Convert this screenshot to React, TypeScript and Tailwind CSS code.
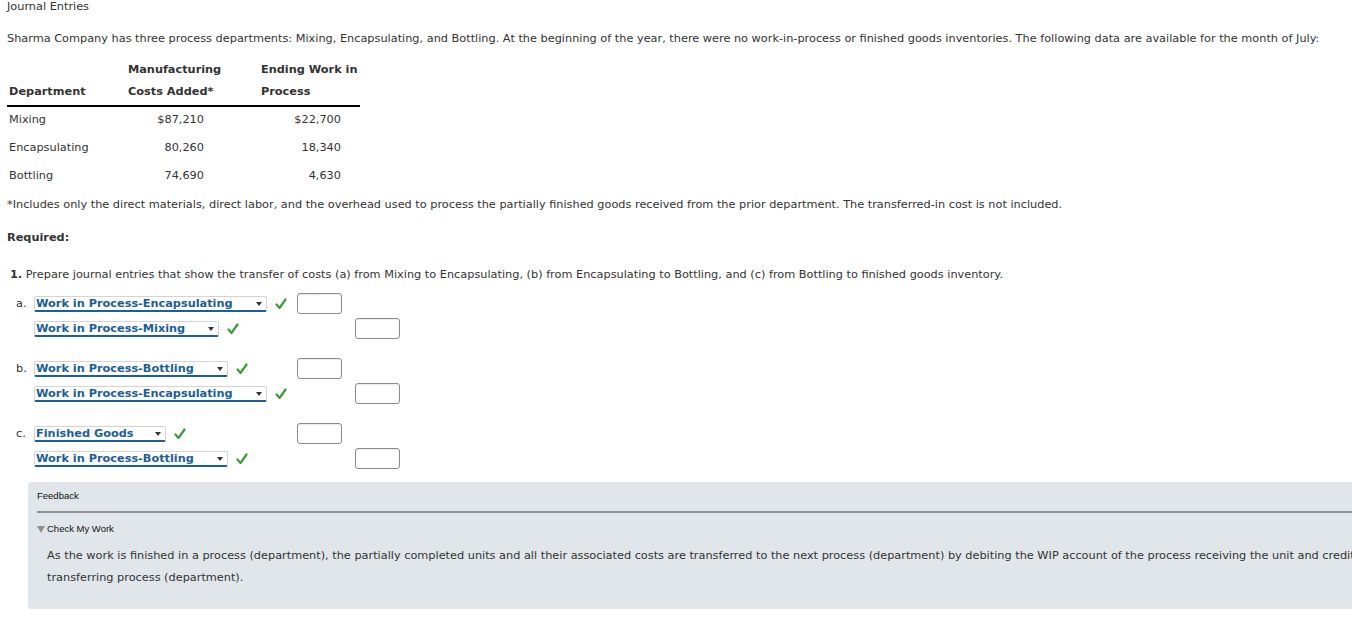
import React from 'react';

interface Entry {
  label?: string;
  account: string;
  width: string;
  side: 'debit' | 'credit';
}

const groups: Entry[][] = [
  [
    { label: 'a.', account: 'Work in Process-Encapsulating', width: 'w-[233px]', side: 'debit' },
    { account: 'Work in Process-Mixing', width: 'w-[185px]', side: 'credit' },
  ],
  [
    { label: 'b.', account: 'Work in Process-Bottling', width: 'w-[194px]', side: 'debit' },
    { account: 'Work in Process-Encapsulating', width: 'w-[233px]', side: 'credit' },
  ],
  [
    { label: 'c.', account: 'Finished Goods', width: 'w-[132px]', side: 'debit' },
    { account: 'Work in Process-Bottling', width: 'w-[194px]', side: 'credit' },
  ],
];

const rows = [
  { dept: 'Mixing', costs: '$87,210', wip: '$22,700' },
  { dept: 'Encapsulating', costs: '80,260', wip: '18,340' },
  { dept: 'Bottling', costs: '74,690', wip: '4,630' },
];

const Check = () => (
  <svg viewBox="0 0 12 12" className="h-[12px] w-[12px] shrink-0">
    <path d="M1.5 6.5 L4.5 10 L10.5 1.5" fill="none" stroke="#3c9a3c" strokeWidth="2.2" strokeLinecap="round" strokeLinejoin="round" />
  </svg>
);

const AccountSelect = ({ account, width }: { account: string; width: string }) => (
  <div className={`${width} relative h-[16px] overflow-hidden rounded-[2px] border border-b-2 border-[#d4d4d4] border-b-[#1b5e98] bg-white`}>
    <span className="absolute left-[1px] top-[-2px] whitespace-nowrap text-[11.3px] font-bold leading-[18px] text-[#1b5e98]">
      {account}
    </span>
    <span className="absolute right-[4px] top-[5px] h-0 w-0 border-x-[3px] border-t-[4px] border-x-transparent border-t-[#333]" />
  </div>
);

const AmountBox = () => (
  <div className="h-[21px] w-[45px] rounded-[3px] border border-[#8c8c8c] bg-white shadow-[inset_0_1px_1px_rgba(0,0,0,0.08)]" />
);

export default function App() {
  return (
    <div className="w-[1352px] h-[621px] overflow-hidden bg-white text-[11.3px] text-[#333] font-['DejaVu_Sans',Verdana,sans-serif]">
      <div className="pl-[7px] leading-[13px]">Journal Entries</div>

      <p className="mt-[19px] pl-[7px] leading-[14px] whitespace-nowrap">
        Sharma Company has three process departments: Mixing, Encapsulating, and Bottling. At the beginning of the year, there were no work-in-process or finished goods inventories. The following data are available for the month of July:
      </p>

      {/* Data table */}
      <div className="ml-[7px] mt-[13px] w-[353px]">
        <div className="grid grid-cols-[121px_133px_99px] border-b-2 border-black font-bold leading-[22px] pb-[2px]">
          <div className="pl-[2px] self-end">Department</div>
          <div>
            Manufacturing
            <br />
            Costs Added*
          </div>
          <div>
            Ending Work in
            <br />
            Process
          </div>
        </div>
        {rows.map((r) => (
          <div key={r.dept} className="grid grid-cols-[121px_133px_99px] h-[28px] items-center pb-[2px]">
            <div className="pl-[2px]">{r.dept}</div>
            <div className="text-right pr-[57px]">{r.costs}</div>
            <div className="text-right pr-[19px]">{r.wip}</div>
          </div>
        ))}
      </div>

      <p className="mt-[6px] pl-[7px] leading-[16px]">
        *Includes only the direct materials, direct labor, and the overhead used to process the partially finished goods received from the prior department. The transferred-in cost is not included.
      </p>

      <p className="mt-[17px] pl-[7px] font-bold leading-[16px]">Required:</p>

      <p className="mt-[21px] pl-[10px] leading-[16px]">
        <span className="font-bold">1.</span> Prepare journal entries that show the transfer of costs (a) from Mixing to Encapsulating, (b) from Encapsulating to Bottling, and (c) from Bottling to finished goods inventory.
      </p>

      {/* Journal entry rows */}
      <div className="mt-[8px] flex flex-col gap-[15px]">
        {groups.map((g, gi) => (
          <div key={gi} className="flex flex-col">
            {g.map((e, ei) => (
              <div key={ei} className="grid grid-cols-[297px_58px_45px] items-center h-[25px]">
                <div className="flex items-center">
                  <span className="w-[34px] pl-[16px] leading-[16px]">{e.label ?? ''}</span>
                  <AccountSelect account={e.account} width={e.width} />
                  <span className="ml-[8px]">
                    <Check />
                  </span>
                </div>
                <div>{e.side === 'debit' && <AmountBox />}</div>
                <div>{e.side === 'credit' && <AmountBox />}</div>
              </div>
            ))}
          </div>
        ))}
      </div>

      {/* Feedback panel */}
      <div className="ml-[28px] mt-[11px] w-[1500px] rounded-[3px] bg-[#e0e6e9] pl-[9px] pb-[20px] pt-[8px]">
        <div className="font-['Liberation_Sans',Arial,sans-serif] text-[9.5px] leading-[12px] text-[#111]">Feedback</div>
        <div className="mt-[9px] h-[2px] bg-[#939393]" />
        <div className="mt-[10px] flex items-center gap-[2px] font-['Liberation_Sans',Arial,sans-serif] text-[9.5px] leading-[12px] text-[#111]">
          <span className="h-0 w-0 border-x-[4px] border-t-[7px] border-x-transparent border-t-[#8f8f8f]" />
          Check My Work
        </div>
        <p className="mt-[10px] pl-[10px] leading-[22px] whitespace-nowrap">
          As the work is finished in a process (department), the partially completed units and all their associated costs are transferred to the next process (department) by debiting the WIP account of the process receiving the unit and crediting the WIP account of the
          <br />
          transferring process (department).
        </p>
      </div>
    </div>
  );
}
